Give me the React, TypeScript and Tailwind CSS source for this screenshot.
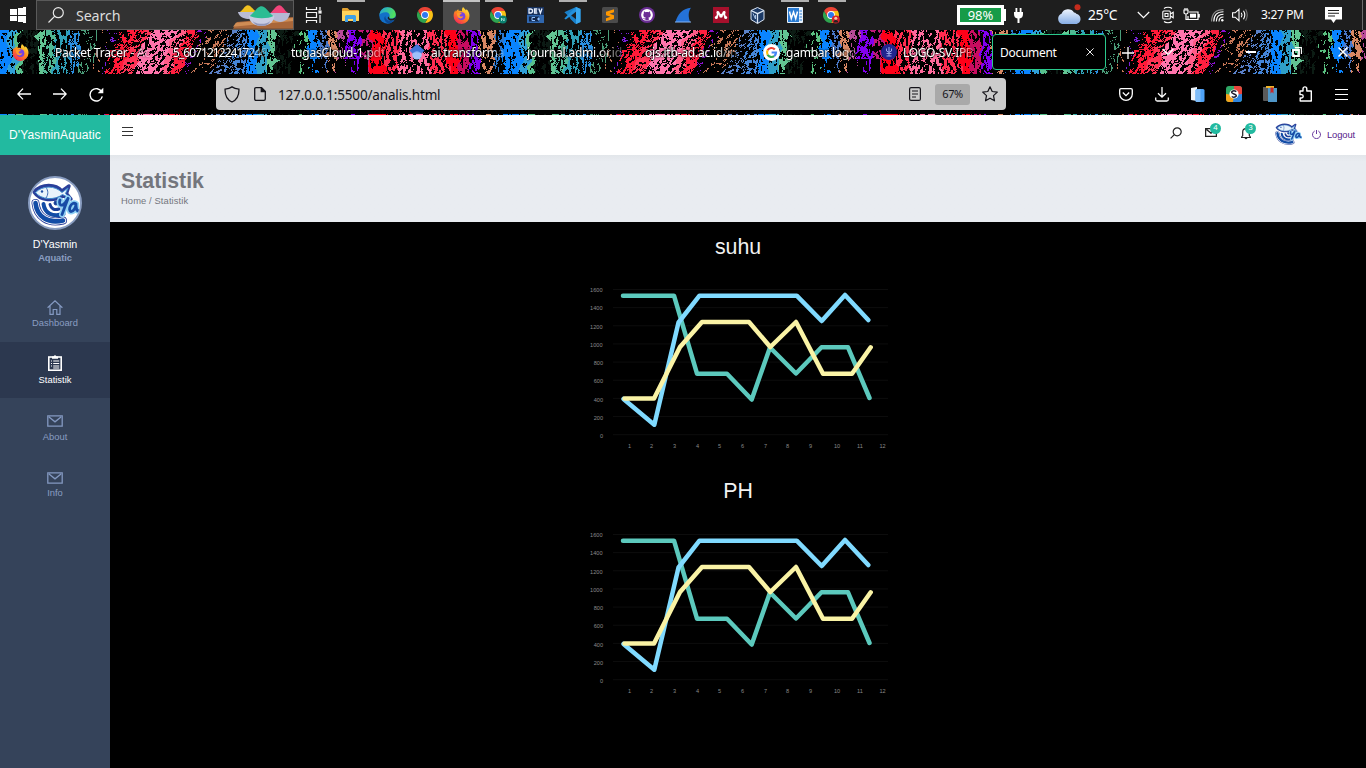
import React from "react";

/* ---------- window theme wallpaper ---------- */

type Stop = [number, string, number];

const STOPS: Stop[] = [
  [0, "#0a84ff", 0.92], [8, "#2f9fd8", 0.7], [16, "#58c08c", 0.8], [20, "#0c1a14", 0.5],
  [37, "#62c592", 0.9], [44, "#50b894", 0.65], [54, "#2fa0b8", 0.55], [68, "#2b8fe0", 0.55], [78, "#4a9c78", 0.25],
  [95, "#c87858", 0.14], [105, "#7a20d8", 0.2], [114, "#ff1a38", 0.5], [124, "#ff1a38", 0.88], [134, "#ff3355", 0.7],
  [144, "#ff74ac", 0.7], [170, "#ff5c88", 0.7], [180, "#ff2040", 0.72], [191, "#8a10d0", 0.22],
  [200, "#c87858", 0.34], [222, "#5a80c8", 0.4], [236, "#4484d8", 0.6], [246, "#0a84ff", 0.88],
  [258, "#2f9fc8", 0.78], [268, "#62c592", 0.8], [275, "#0c1c14", 0.5], [296, "#5ac080", 0.46],
  [307, "#0a84ff", 0.9], [318, "#4a78c8", 0.45], [327, "#d88864", 0.74], [338, "#b84a98", 0.55],
  [347, "#8200f0", 0.74], [358, "#c01878", 0.6], [371, "#ff0018", 0.92], [384, "#ff2c50", 0.55],
  [398, "#ff6a9c", 0.53], [428, "#ff2c50", 0.6], [446, "#ff0018", 0.92], [458, "#c80c60", 0.75],
  [468, "#8200f0", 0.65], [480, "#d88864", 0.5], [494, "#2b78d0", 0.45], [503, "#0a84ff", 0.92],
];

function hash(x: number, y: number) {
  let n = (x * 374761393 + y * 668265263) | 0;
  n = Math.imul(n ^ (n >>> 13), 1274126177);
  return ((n ^ (n >>> 16)) >>> 0) / 4294967295;
}

function noise(x: number, y: number) {
  const xi = Math.floor(x);
  const yi = Math.floor(y);
  const u = x - xi;
  const v = y - yi;
  const a = hash(xi, yi) * (1 - u) + hash(xi + 1, yi) * u;
  const b = hash(xi, yi + 1) * (1 - u) + hash(xi + 1, yi + 1) * u;
  return a * (1 - v) + b * v;
}

function colorAt(px: number, y: number): string | null {
  const x = ((px % 512) + 512) % 512;
  let sx = x;
  if (x > 85 && x < 245) {
    const k = Math.min(1, (x - 85) / 25, (245 - x) / 25);
    sx = x + k * (y - 14) * 0.45;
  }
  sx += (noise(x / 9, y / 6) - 0.5) * 9;
  sx = ((sx % 512) + 512) % 512;
  let s = STOPS[0];
  for (const stop of STOPS) if (stop[0] <= sx) s = stop;
  const diagonal = x > 105 && x < 245;
  const f = diagonal
    ? noise((x + y * 0.7) / 2, (y - x * 0.25) / 2.6) * 0.7 + hash(x, y) * 0.3
    : noise(x / 1.5, y / 3.4) * 0.78 + hash(x, y) * 0.22;
  let density = s[2];
  if (y > 28 && x > 290 && x < 368) density *= 0.3;
  return f < 0.2 + density * 0.5 ? s[1] : null;
}

function buildWallpaper(height: number, offset: number) {
  const paths: Record<string, string> = {};
  for (let y = 0; y < height; y++) {
    let x = 0;
    while (x < 1366) {
      const c = colorAt(x, y + offset);
      let end = x + 1;
      while (end < 1366 && colorAt(end, y + offset) === c) end++;
      if (c) paths[c] = (paths[c] || "") + `M${x} ${y}h${end - x}v1H${x}z`;
      x = end;
    }
  }
  return Object.entries(paths);
}

const TAB_PAPER = buildWallpaper(44, 0);
const EDGE_PAPER = buildWallpaper(1, 41);

function Wallpaper({ paths, height }: { paths: [string, string][]; height: number }) {
  return (
    <svg className="absolute top-0 left-0" width="1366" height={height} shapeRendering="crispEdges">
      {paths.map(([c, d]) => (
        <path key={c} d={d} fill={c} />
      ))}
    </svg>
  );
}

/* ---------- application icons ---------- */

const Firefox = () => (
  <svg width="17" height="17" viewBox="0 0 16 16">
    <defs>
      <linearGradient id="ff" x1="0.8" y1="0.1" x2="0.2" y2="1">
        <stop offset="0" stopColor="#ffe03a" />
        <stop offset="0.45" stopColor="#ff8a1c" />
        <stop offset="1" stopColor="#f5205c" />
      </linearGradient>
    </defs>
    <path d="M9.500 0c1 1.500 2 1.900 2.700 3.400l.6-1.200c1.900 1.900 2.700 4 2.700 6.200a7.400 7.400 0 0 1-14.900.2C.5 6 1.200 4.300 2.500 3l.1 1.600C3.300 3.200 4 2.500 5 2l.3 1.600C6.500 3.300 8 3.600 8.700 4.500 8 3 8.500 1.200 9.500 0z" fill="url(#ff)" />
    <circle cx="8" cy="8.600" r="3.600" fill="#7542e5" />
    <path d="M3.800 5.600c2-1 3.600-.5 4.700.9-1.500-.1-2.300.7-2.200 1.700.9 1.400 2.600.8 3.300.2-.2 2.100-2.500 2.900-4.100 1.900-1.300-.9-2-2.500-1.700-4.700z" fill="#ff9a28" />
  </svg>
);

const Chrome = ({ badge }: { badge?: "n" | "user" }) => (
  <svg width={badge ? 18 : 16} height="17" viewBox={badge ? "0 0 18 17" : "0 0 16 17"}>
    <path d="M8 4h6.900A8 8 0 0 1 8 16l3.400-6z" fill="#fbc116" />
    <path d="M1.070 4A8 8 0 0 1 14.930 4H8L4.500 10z" fill="#ea4335" />
    <path d="M1.070 4A8 8 0 0 0 8 16l3.400-6H4.500z" fill="#2ea44f" />
    <circle cx="8" cy="8" r="3.900" fill="#fff" />
    <circle cx="8" cy="8" r="3" fill="#2f78ee" />
    {badge === "n" && (
      <g>
        <circle cx="12.800" cy="12.500" r="4" fill="#0a8070" />
        <path d="M11.500 14v-3l2.600 3v-3" stroke="#bfeee2" strokeWidth=".8" fill="none" />
      </g>
    )}
    {badge === "user" && (
      <g>
        <circle cx="12.800" cy="12.500" r="4" fill="#d8202a" />
        <circle cx="12.800" cy="11.300" r="1.500" fill="#f3c9a8" />
        <path d="M10.400 15.500c.3-3.200 4.500-3.200 4.800 0z" fill="#222" />
      </g>
    )}
  </svg>
);

const Folder = () => (
  <svg width="17" height="16" viewBox="0 0 17 16">
    <path d="M0 2q0-1 1-1h4.500l2 2H16q1 0 1 1v2H0z" fill="#e0a030" />
    <path d="M0 4h17v9.500q0 .5-.5.500H.5q-.5 0-.5-.5z" fill="#ffd35c" />
    <path d="M3 15V9.500Q3 8 4.500 8h8q1.500 0 1.500 1.500V15h-3v-3H6v3z" fill="#3f9fe4" />
  </svg>
);

const Edge = () => (
  <svg width="17" height="17" viewBox="0 0 17 17">
    <defs>
      <linearGradient id="ed" x1="0" y1="0" x2="1" y2="0.3">
        <stop offset="0" stopColor="#1f9fe0" />
        <stop offset="1" stopColor="#4fe060" />
      </linearGradient>
    </defs>
    <circle cx="8.500" cy="8.500" r="8.300" fill="#1270c8" />
    <path d="M.3 8C1 3.500 4 .2 8.500.2c5 0 8.300 3.500 8.300 7 0 3-2.300 4.300-4.500 4.300-2 0-2.500-1-1.800-1.700C11.400 7 9 5 6.500 5.200 3.500 5.400 1 6.500.3 8z" fill="url(#ed)" />
    <path d="M6.400 9c-.3 3.600 3.300 6 8.600 4.300-.8 1.200-2.300 2.600-4.600 3.300C6 16 3.700 11 6.400 9z" fill="#0b4a98" />
    <path d="M10.300 9.900c-.8.900.4 2.400 3.300 1.800l3.200-1.400-1.100 2.500c-3 1.300-6.300.6-7-1.400-.2-1.200.8-1.900 1.600-1.500z" fill="#1e1e1e" />
  </svg>
);

const DevCpp = () => (
  <svg width="17" height="16" viewBox="0 0 17 16">
    <rect width="17" height="16" fill="#16305c" />
    <rect y="8" width="17" height="8" fill="#2f66ae" />
    <rect x="2" y="9.500" width="10" height="5" fill="#12264a" />
    <path d="M2 2h1.500q2 0 2 2t-2 2H2zM10.300 2H7.500v4h2.800M7.500 4H10M11.800 1.500l1.600 4.500L15 1.500" stroke="#e8f0ff" strokeWidth="1.300" fill="none" />
    <path d="M8 10.500H5v3h3M10 12h3M11.500 10.500v3" stroke="#8fc0ff" strokeWidth="1" fill="none" />
  </svg>
);

const VSCode = () => (
  <svg width="17" height="17" viewBox="0 0 17 17">
    <path d="M12 0l4.500 2v13L12 17 1.500 6.300.3 5.600l1.500-1.200z" fill="#1a7fc8" />
    <path d="M12 0L.3 11.400l1.500 1.200L12.500 4.500z" fill="#2390dc" />
    <path d="M11.500 17L6 11.500 12.300 6.500 12 12z" fill="#1a7fc8" />
    <path d="M12 4.800v7.400L7.200 8.500z" fill="#1e1e1e" />
    <path d="M12 0l4.500 2v13L12 17z" fill="#38a8f0" />
  </svg>
);

const Sublime = () => (
  <svg width="16" height="16" viewBox="0 0 16 16">
    <rect width="16" height="16" rx="1.500" fill="#4b4b4b" />
    <path d="M12 2.300v3L7.500 6.700 12 8.200v3.500L4 14.200v-3l4.500-1.400L4 8.300V4.800z" fill="#ff9800" />
  </svg>
);

const Github = () => (
  <svg width="16" height="16" viewBox="0 0 16 16">
    <circle cx="8" cy="8" r="8" fill="#6c2f96" />
    <circle cx="8" cy="8" r="5.900" fill="#fff" />
    <path d="M5 4.300l1.600.9c1-.3 1.900-.3 2.800 0l1.600-.9.2 1.900c1.300 2.300.1 4.100-1.800 4.400.5.600.4 1.800.4 3H6.400v-1.300c-1.300.2-1.800-.2-2.400-1.200 1 0 1 .8 2.400.4l.3-.9C4.600 10.300 3.700 8.400 4.800 6.200z" fill="#6c2f96" />
  </svg>
);

const Wireshark = () => (
  <svg width="17" height="16" viewBox="0 0 17 16">
    <path d="M.5 15C2.500 7.500 7.500 1.500 16 .8c-3 4.200-2.800 9.500-.8 14.200z" fill="#2472d8" />
    <path d="M0 15h16" stroke="#85b5f4" strokeWidth="1" />
  </svg>
);

const Mendeley = () => (
  <svg width="16" height="16" viewBox="0 0 16 16">
    <rect width="16" height="16" fill="#a6102c" />
    <path d="M3.300 10.500Q5 9 4.800 5.700L8 8.500l3.200-2.800Q11 9 12.700 10.500" stroke="#fff" strokeWidth="1.800" fill="none" />
    <circle cx="8" cy="8.800" r="1.900" fill="#fff" />
    <circle cx="3.300" cy="10.600" r="1.500" fill="#fff" />
    <circle cx="12.700" cy="10.600" r="1.500" fill="#fff" />
    <circle cx="5" cy="5.600" r="1.500" fill="#fff" />
    <circle cx="11" cy="5.600" r="1.500" fill="#fff" />
  </svg>
);

const VBox = () => (
  <svg width="15" height="17" viewBox="0 0 15 17">
    <path d="M7.500.5l6.500 3v9l-6.500 4-6.500-4v-9z" fill="#1c3a66" stroke="#dbe6f4" strokeWidth="1" />
    <path d="M1 3.500l6.500 3.200L14 3.500M7.500 6.700v9.500" stroke="#dbe6f4" strokeWidth="1.300" fill="none" />
    <path d="M3 6.500l2.500 5.500V8" stroke="#a9c4e6" fill="none" />
  </svg>
);

const Word = () => (
  <svg width="16" height="16" viewBox="0 0 16 16">
    <rect width="16" height="16" rx="1" fill="#e8f1fb" />
    <rect x="1" y="1" width="11" height="14" fill="#2b7cd3" />
    <path d="M2.500 4.500L4.300 11.500 6.500 5l2.200 6.500 1.800-7" stroke="#fff" strokeWidth="1.500" fill="none" />
    <path d="M12.500 4H15M12.500 7H15M12.500 10H15M12.500 13H15" stroke="#2b7cd3" strokeWidth="1" />
  </svg>
);

const TaskView = () => (
  <svg width="17" height="16" viewBox="0 0 17 16" fill="none" stroke="#f2f2f2" strokeWidth="1.200">
    <path d="M1.500 0v2.500h10V0M1.500 5.500h10v5h-10zM1.500 16v-2.500h10V16M15 0v3M15 8v8" />
    <rect x="14" y="4" width="2" height="2" fill="#f2f2f2" />
  </svg>
);

const apps: { icon: React.ReactNode; bar?: boolean; active?: boolean }[] = [
  { icon: <Folder />, bar: true },
  { icon: <Edge /> },
  { icon: <Chrome /> },
  { icon: <Firefox />, bar: true, active: true },
  { icon: <Chrome badge="n" />, bar: true },
  { icon: <DevCpp /> },
  { icon: <VSCode />, bar: true },
  { icon: <Sublime /> },
  { icon: <Github /> },
  { icon: <Wireshark /> },
  { icon: <Mendeley /> },
  { icon: <VBox /> },
  { icon: <Word />, bar: true },
  { icon: <Chrome badge="user" />, bar: true },
];

const Bowls = () => (
  <svg width="60" height="28" viewBox="0 0 61 28">
    <path d="M4 21L61 16V28H0z" fill="#a9673a" />
    <path d="M3 22L61 17v3L0 26z" fill="#cf8d55" />
    <path d="M7 11C11 8 12 4 15 4s5 4 9 7z" fill="#f0c020" />
    <path d="M5 11h19c-1 5-4 7-9 7S6 15 5 11z" fill="#b9bcd6" />
    <path d="M38 12C42 8 44 4 47 4s5 5 9 8z" fill="#f0447a" />
    <path d="M37 12h21c-1 6-5 9-10 9s-10-3-11-9z" fill="#b5b8d4" />
    <path d="M16 15c3-3 23-3 26 0-1 7-6 10-13 10s-12-3-13-10z" fill="#c9cce2" />
    <path d="M17 15C24 9 25 5 29 5s7 6 12 10c-5 3-18 3-24 0z" fill="#2bbd93" />
    <path d="M20 20c4 4 14 4 18 0-2 4-5 5-9 5s-7-1-9-5z" fill="#9297ba" />
  </svg>
);

function Taskbar() {
  return (
    <div className="flex h-[30px] w-full items-center bg-[#1e1e1e] text-white">
      <div className="flex w-9 justify-center">
        <svg width="16" height="16" viewBox="0 0 16 16" fill="#fff" shapeRendering="crispEdges">
          <path d="M0 2.500l7-1V7.500H0zM8 1.300L16 0v7.500H8zM0 8.500h7v6l-7-1zM8 8.500h8V16l-8-1.300z" />
        </svg>
      </div>
      <div className="flex h-[30px] w-[258px] items-center border border-[#5a5a5a] bg-[#323232] pl-[11px]">
        <svg width="16" height="16" viewBox="0 0 16 16" fill="none" stroke="#e8e8e8" strokeWidth="1.200">
          <circle cx="10.300" cy="5.700" r="5" />
          <path d="M6.800 9.200L.5 15.500" />
        </svg>
        <span className="mt-px ml-[12px] w-[120px] font-['Noto_Sans',sans-serif] text-[14.300px] leading-7 tracking-[-0.15px] text-[#dcdcdc]">Search</span>
        <div className="ml-auto">
          <Bowls />
        </div>
      </div>
      <div className="flex w-[38px] justify-center">
        <TaskView />
      </div>
      {apps.map((a, i) => (
        <div key={i} className={"flex h-[30px] w-[37px] flex-col items-center " + (a.active ? "bg-[#4a4a4a]" : "")}>
          <div className={"h-[2px] " + (a.active ? "w-full bg-[#c4c4c4]" : a.bar ? "w-7 bg-[#b0b0b0]" : "w-7")} />
          <div className="flex h-[26px] items-center">{a.icon}</div>
        </div>
      ))}
      <div className="ml-[107px] flex h-5 w-[47px] items-center justify-center border-[3px] border-white bg-[#169b48] font-['Noto_Sans',sans-serif] text-[13px] leading-4">
        98%
      </div>
      <div className="h-3 w-[2px] bg-white" />
      <svg className="ml-[7px]" width="11" height="15" viewBox="0 0 11 15" fill="#fff">
        <path d="M2.500 0h1.800v4h2.400V0h1.800v4H10v2q0 4-3.500 4.500V15h-2v-4.500Q1 10 1 6V4h1.500z" />
      </svg>
      <svg className="mb-[3px] ml-[32px]" width="26" height="22" viewBox="0 0 26 22">
        <defs>
          <linearGradient id="cl" x1="0" y1="0" x2="0" y2="1">
            <stop offset="0" stopColor="#eef4fd" />
            <stop offset="1" stopColor="#86aee6" />
          </linearGradient>
        </defs>
        <path d="M6 21a5.500 5.500 0 0 1-.5-10.300A7 7 0 0 1 18 9.500c1 0 1.700.4 2.300 1.200 6 1.300 5.500 10.300-.8 10.300z" fill="url(#cl)" />
        <circle cx="21.500" cy="4.200" r="3" fill="#c42b1c" />
      </svg>
      <span className="ml-[6px] w-[45px] font-['Noto_Sans',sans-serif] text-[13.800px] tracking-[-0.3px]">25°C</span>
      <svg className="ml-[4px]" width="13" height="8" viewBox="0 0 13 8" fill="none" stroke="#fff" strokeWidth="1.200">
        <path d="M.8 1l5.700 5.700L12.200 1" />
      </svg>
      <svg className="ml-[12px]" width="12" height="18" viewBox="0 0 12 18" fill="none" stroke="#fff" strokeWidth="1.100">
        <path d="M2 2.500C4 .8 8 .8 10 2.500M2 15.500c2 1.700 6 1.700 8 0" />
        <rect x=".8" y="5" width="7.500" height="8" rx="1" />
        <path d="M8.300 8l2.900-1.800v5.600L8.300 10M3 7.500h3v3H3z" />
      </svg>
      <svg className="ml-[9px]" width="17" height="14" viewBox="0 0 17 14" fill="none" stroke="#fff" strokeWidth="1.200">
        <path d="M6 4h9v7.500H5V8M1 2h4v2.500Q5 6 3 6T1 4.500zM2 0v2M4 0v2M3 6v5.500h2M16.200 6v3.500" />
        <rect x="7" y="5.700" width="6" height="4" fill="#fff" stroke="none" />
      </svg>
      <svg className="ml-[11px]" width="13" height="13" viewBox="0 0 13 13" fill="none" stroke="#fff" strokeWidth="1.100">
        <circle cx="11.300" cy="11.300" r="1.200" fill="#fff" stroke="none" />
        <path d="M8 12.500Q8 8 12.500 8" />
        <path d="M5.300 12.500Q5.300 5.300 12.500 5.300M2.800 12.500Q2.800 2.800 12.500 2.800" />
        <path d="M.6 12.500Q.6.6 12.500.6" stroke="#8a8a8a" />
      </svg>
      <svg className="ml-[8px]" width="16" height="14" viewBox="0 0 16 14" fill="none" stroke="#fff" strokeWidth="1.100">
        <path d="M.6 4.800h2.600L7 1.300v11.400L3.200 9.200H.6zM9.300 4.700q1.500 2.300 0 4.600M11.500 2.800q2.600 4.200 0 8.400" />
        <path d="M13.600 1.200q3.300 5.800 0 11.600" stroke="#777" />
      </svg>
      <span className="ml-[13px] w-[54px] font-['Noto_Sans',sans-serif] text-[12px] tracking-[-0.35px] whitespace-nowrap">3:27 PM</span>
      <svg className="ml-[10px]" width="17" height="16" viewBox="0 0 17 16">
        <path d="M0 0h17v12.500h-6L8.500 16 6 12.500H0z" fill="#fff" />
        <path d="M3 3.500h11M3 6.200h11M3 9h7" stroke="#1e1e1e" strokeWidth="1.100" />
      </svg>
      <div className="mr-[3px] ml-auto h-[30px] w-px bg-[#6b6b6b]" />
    </div>
  );
}

/* ---------- browser chrome ---------- */

const Scholar = () => (
  <svg width="16" height="16" viewBox="0 0 16 16">
    <circle cx="8" cy="10.800" r="4.800" fill="#9fc1fa" />
    <path d="M8 0l7.500 6.500-3 3Q8 5.500 3.500 9.500l-3-3z" fill="#3f74d8" />
    <path d="M3.700 9Q8 5.500 12.300 9 8 7.500 3.700 9z" fill="#6f9df0" />
  </svg>
);

const Google = () => (
  <svg width="17" height="17" viewBox="0 0 17 17" fill="none" strokeWidth="2.200">
    <circle cx="8.500" cy="8.500" r="8.500" fill="#fff" />
    <path d="M4.600 6.300A4.500 4.500 0 0 1 11.800 5.400" stroke="#ea4335" />
    <path d="M4.600 10.700a4.500 4.500 0 0 1 0-4.400" stroke="#fbbc05" />
    <path d="M11.200 12.100a4.500 4.500 0 0 1-6.600-1.400" stroke="#34a853" />
    <path d="M8.600 8.500H13a4.500 4.500 0 0 1-1.800 3.600" stroke="#4285f4" />
  </svg>
);

const Crest = () => (
  <svg width="16" height="16" viewBox="0 0 16 16" fill="none">
    <circle cx="8" cy="8" r="8" fill="#20248e" />
    <path d="M8 3v9M5.500 4.500v2.500Q8 9.500 10.500 7V4.500M5.500 9.500h5M5.500 12h5" stroke="#98a5e8" strokeWidth="1" />
  </svg>
);

const tabs: { label: string; icon?: React.ReactNode; tracking: string }[] = [
  { label: "Packet Tracer - Ac", tracking: "tracking-[-0.22px]" },
  { label: "5_60712122417246", tracking: "tracking-[-0.95px]" },
  { label: "tugasCloud-1.pdf", tracking: "tracking-[-0.22px]" },
  { label: "ai transforma", icon: <Scholar />, tracking: "tracking-[-0.22px]" },
  { label: "journal.admi.or.id", tracking: "tracking-[-0.22px]" },
  { label: "ojs.itb-ad.ac.id/in", tracking: "tracking-[-0.22px]" },
  { label: "gambar logo", icon: <Google />, tracking: "tracking-[-0.22px]" },
  { label: "LOGO-SV-IPB", icon: <Crest />, tracking: "tracking-[-0.35px]" },
];

function TabStrip() {
  return (
    <div className="relative h-11 w-full overflow-hidden bg-black">
      <Wallpaper paths={TAB_PAPER} height={44} />
      <div className="relative flex h-11 items-center font-['Noto_Sans',sans-serif] text-[12px] text-white">
        <div className="flex w-[47px] pl-3">
          <Firefox />
        </div>
        {tabs.map((t) => (
          <div key={t.label} className="flex w-[118px] items-center gap-[6px] pl-2">
            {t.icon}
            <span
              className={
                "mt-px whitespace-nowrap [text-shadow:0_0_2px_#000,0_0_2px_#000] [mask-image:linear-gradient(to_right,#000_76%,rgba(0,0,0,0.25))] " +
                t.tracking
              }
            >
              {t.label}
            </span>
          </div>
        ))}
        <div className="ml-px flex h-9 w-[114px] items-center justify-between rounded border border-[#2ac98c] bg-black pr-[11px] pl-[7px]">
          <span className="mt-px tracking-[-0.3px]">Document</span>
          <svg width="8" height="8" viewBox="0 0 8 8" stroke="#eee" strokeWidth="1">
            <path d="M.4.4l7.200 7.200M7.600.4L.4 7.600" />
          </svg>
        </div>
        <svg className="mt-px ml-[16px]" width="12" height="12" viewBox="0 0 12 12" stroke="#fff" strokeWidth="1.300">
          <path d="M6 0v12M0 6h12" />
        </svg>
        <svg className="ml-[28px]" width="12" height="8" viewBox="0 0 12 8" fill="none" stroke="#fff" strokeWidth="1.300">
          <path d="M.7 1L6 6.500 11.300 1" />
        </svg>
        <div className="ml-[72px] h-[2px] w-[10px] bg-white" />
        <svg className="ml-[36px]" width="10" height="10" viewBox="0 0 10 10" fill="none" stroke="#fff">
          <path d="M1 3h6v6H1z" strokeWidth="1.800" />
          <path d="M3 .6h6.400V7" strokeWidth="1.100" />
        </svg>
        <svg className="ml-[36px]" width="10" height="10" viewBox="0 0 10 10" stroke="#fff" strokeWidth="1.500">
          <path d="M.5.500l9 9M9.500.500l-9 9" />
        </svg>
      </div>
    </div>
  );
}

function NavBar() {
  return (
    <div className="flex h-10 w-full items-center bg-black">
      <svg className="ml-[17px]" width="14" height="12" viewBox="0 0 14 12" fill="none" stroke="#fff" strokeWidth="1.300">
        <path d="M6 .6L.8 6 6 11.400M.8 6H14" />
      </svg>
      <svg className="ml-[22px]" width="14" height="12" viewBox="0 0 14 12" fill="none" stroke="#fff" strokeWidth="1.300">
        <path d="M8 .6L13.200 6 8 11.400M13.200 6H0" />
      </svg>
      <svg className="ml-[22px]" width="15" height="15" viewBox="0 0 15 15" fill="none" stroke="#fff" strokeWidth="1.400">
        <path d="M12.800 5A6.200 6.200 0 1 0 13.300 9.300" />
        <path d="M14.300.7v5.600H8.700z" fill="#fff" stroke="none" />
      </svg>
      <div className="ml-[112px] flex h-8 w-[790px] items-center rounded bg-[#cccccc]">
        <svg className="ml-[8px]" width="16" height="17" viewBox="0 0 16 17" fill="none" stroke="#15141a" strokeWidth="1.300">
          <path d="M8 .9c2 1.400 4.200 2 6.900 2.200C15.200 9 13 13.800 8 16 3 13.800.8 9 1.100 3.100 3.800 2.900 6 2.300 8 .9z" />
        </svg>
        <svg className="ml-[14px]" width="12" height="14" viewBox="0 0 12 14" fill="none" stroke="#15141a" strokeWidth="1.300">
          <path d="M2 .7h5.500L11.300 4.500V12q0 1.300-1.300 1.300H2Q.7 13.300.7 12V2Q.7.700 2 .700z" />
          <path d="M7.300.7v4h4z" fill="#15141a" />
        </svg>
        <span className="mt-[2px] ml-[12px] font-['Noto_Sans',sans-serif] text-[13.500px] tracking-[-0.16px] text-[#15141a]">127.0.0.1:5500/analis.html</span>
        <svg className="ml-auto" width="12" height="14" viewBox="0 0 12 14" fill="none" stroke="#15141a" strokeWidth="1.200">
          <rect x=".6" y=".6" width="10.800" height="12.800" rx="1.500" />
          <path d="M3 4h6M3 7h6M3 10h4" />
        </svg>
        <div className="mt-px ml-[14px] flex h-[21px] w-[35px] items-center justify-center rounded-[3px] bg-[#a9a9a9] font-['Noto_Sans',sans-serif] text-[11px] tracking-[-0.4px] text-[#15141a]">
          67%
        </div>
        <svg className="mr-[8px] ml-[12px]" width="16" height="16" viewBox="0 0 16 16" fill="none" stroke="#15141a" strokeWidth="1.200" strokeLinejoin="round">
          <path d="M8 .8l2.200 4.700 5.100.6-3.800 3.500 1 5.200L8 12.200l-4.500 2.600 1-5.200L.7 6.100l5.100-.6z" />
        </svg>
      </div>
      <svg className="ml-[113px]" width="14" height="13" viewBox="0 0 14 13" fill="none" stroke="#fff" strokeWidth="1.300">
        <path d="M2 .7h10q1.300 0 1.300 1.300v4a6.300 6.300 0 0 1-12.600 0V2Q.7.700 2 .700zM3.800 4.500L7 7.600l3.200-3.100" />
      </svg>
      <svg className="ml-[22px]" width="14" height="15" viewBox="0 0 14 15" fill="none" stroke="#fff" strokeWidth="1.300">
        <path d="M7 0v10M3 6.200L7 10.200l4-4M.7 10.500v2q0 1.500 1.500 1.500h9.600q1.500 0 1.500-1.500v-2" />
      </svg>
      <svg className="ml-[22px]" width="14" height="15" viewBox="0 0 14 15">
        <path d="M0 1l6-1v14l-6-1z" fill="#eef3f8" />
        <rect x="4.500" y="2" width="9" height="13" rx="1.500" fill="#4fa3f7" />
        <path d="M4.500 3l5-1v13H6q-1.500 0-1.500-1.500z" fill="#7ebcf8" />
      </svg>
      <svg className="ml-[21px]" width="16" height="16" viewBox="0 0 16 16">
        <rect width="16" height="16" rx="3" fill="#2fa866" />
        <path d="M8 0h5q3 0 3 3v6L8 8z" fill="#e8453c" />
        <path d="M0 8l8 1v7H3q-3 0-3-3z" fill="#f5a31c" />
        <path d="M8 9l8-1v5q0 3-3 3H7z" fill="#2f86e0" />
        <circle cx="8" cy="8" r="4.600" fill="#fff" />
        <path d="M10.300 5.600Q8 4 6.200 5.300T8 8t1.700 2.700T5.700 10.500" stroke="#223" strokeWidth="1.500" fill="none" />
      </svg>
      <svg className="ml-[21px]" width="15" height="16" viewBox="0 0 15 16">
        <path d="M0 1h8v14H1q-1 0-1-1z" fill="#5a5a5a" />
        <rect x="5" y="2" width="9" height="14" fill="#5097c8" />
        <rect x="3" y="0" width="8" height="2" fill="#f0b429" />
        <path d="M7.500 1.500h3v6L9 6l-1.500 1.500z" fill="#c82828" />
      </svg>
      <svg className="ml-[20px]" width="15" height="16" viewBox="0 0 15 16" fill="none" stroke="#fff" strokeWidth="1.400" strokeLinejoin="round">
        <path d="M5 5V2.800a1.900 1.900 0 0 1 3.800 0V5h4.500v10H2.200v-3h1.300a1.700 1.700 0 0 0 0-3.400H2V5z" strokeDasharray="none" />
      </svg>
      <svg className="ml-[22px]" width="13" height="11" viewBox="0 0 13 11" stroke="#fff" strokeWidth="1.200" shapeRendering="crispEdges">
        <path d="M0 .6h13M0 5.500h13M0 10.400h13" />
      </svg>
    </div>
  );
}

/* ---------- page ---------- */

const FishMark = () => (
  <g fill="none" strokeLinecap="round">
    <path d="M5.500 25C7 39 18 46 33 42.500" stroke="#2a3f9a" strokeWidth="8" />
    <path d="M5.500 25C7 39 18 46 33 42.500" stroke="#fff" strokeWidth="6.400" />
    <path d="M5.500 25C7 39 18 46 33 42.500" stroke="#124ca6" strokeWidth="4.600" />
    <path d="M13.500 26c1 9 9 13.500 20 10" stroke="#124ca6" strokeWidth="4" />
    <path d="M20 26.500c1 4 4 6 9 4.500" stroke="#1c3f98" strokeWidth="3" />
    <circle cx="26" cy="25" r="2" fill="#123f96" stroke="#1c3f98" />
    <path d="M4 14C12 5 26 6 32 13L39 8 36.500 15.500 41 21 33 18C24 23.500 10 23 4 14z" fill="#fff" stroke="#2a3f9a" strokeWidth="3.400" strokeLinejoin="round" />
    <path d="M5.500 14.500C13 7 25 7.500 32 14.500L38 10 35.500 15.500 39.500 20 32.500 16.500C25 22.500 11 22 5.500 14.500z" fill="#e9f3fb" stroke="#3f8ccc" strokeWidth="1" />
    <path d="M16 9.500c2.500 3 2.500 7 0 10.500" stroke="#3f6cb4" strokeWidth="1" />
    <circle cx="12" cy="13.500" r="1.200" fill="#1f4ea4" />
    <path d="M30 22c-1.500 5 1.500 7 5 3l3-4.500M38 20.500l-6 16M46 26c-5-3.500-8.500 7-5 7.500 3 0 5-5 5-7.500 0 4 0 7 3 7" stroke="#8fd0f4" strokeWidth="6" />
    <path d="M30 22c-1.500 5 1.500 7 5 3l3-4.500M38 20.500l-6 16M46 26c-5-3.500-8.500 7-5 7.500 3 0 5-5 5-7.500 0 4 0 7 3 7" stroke="#174ba6" strokeWidth="2.800" />
  </g>
);

const Home = () => (
  <svg width="16" height="15" viewBox="0 0 16 15" fill="none" stroke="#8499c1" strokeWidth="1.200">
    <path d="M.6 7.800L8 .8l7.400 7M3 6v8.400h3.200V9.500h3.600v4.900H13V6" />
  </svg>
);
const Clipboard = () => (
  <svg width="14" height="16" viewBox="0 0 14 16">
    <rect x=".8" y="2" width="12.400" height="13.200" fill="#2c384f" stroke="#fff" strokeWidth="1.600" />
    <path d="M4 1.500h1.500Q7-.8 8.500 1.500H10v2.300H4z" fill="#fff" />
    <path d="M3 6h1M3 8.500h1M3 11h1M5.200 6h6M5.200 8.500h6M5.200 11h6M5.200 13h6" stroke="#fff" strokeWidth="1.200" />
  </svg>
);
const Mail = ({ color = "#8499c1", w = 16, h = 12 }: { color?: string; w?: number; h?: number }) => (
  <svg width={w} height={h} viewBox="0 0 16 12" fill="none" stroke={color} strokeWidth={w < 16 ? 1.7 : 1.3}>
    <path d="M.8.900h14.400v10.200H.8zM2 2L8 6.800 14 2" />
  </svg>
);

const items = [
  { label: "Dashboard", icon: <Home />, gap: "pt-[13px] gap-[2px]" },
  { label: "Statistik", icon: <Clipboard />, active: true, gap: "pt-[13px] gap-[3px]" },
  { label: "About", icon: <Mail />, gap: "pt-[15px] gap-[2px]" },
  { label: "Info", icon: <Mail />, gap: "pt-[16px] gap-[1px]" },
];

function Sidebar() {
  return (
    <aside className="flex w-[110px] shrink-0 flex-col bg-[#35435a]">
      <div className="flex h-10 items-center justify-center bg-[#22baa0] text-[12px] tracking-[0.12px] text-white">D'YasminAquatic</div>
      <div className="flex h-[131px] flex-col items-center pt-[21px]">
        <div className="size-[54px] overflow-hidden rounded-full border-2 border-[#899dc1] bg-white">
          <svg width="50" height="50" viewBox="0 0 50 50">
            <FishMark />
          </svg>
        </div>
        <p className="mt-[7px] text-[10.700px] leading-[14px] text-white">D'Yasmin</p>
        <p className="text-[9.400px] leading-[13px] font-bold tracking-[-0.1px] text-[#899dc1]">Aquatic</p>
      </div>
      <nav className="flex flex-col">
        {items.map((it) => (
          <div
            key={it.label}
            className={"flex h-14 flex-col items-center " + it.gap + (it.active ? " bg-[#2c384f] text-white" : " text-[#899dc1]")}
          >
            <div className="flex h-4 items-center">{it.icon}</div>
            <span className="text-[9.400px] leading-[11px]">{it.label}</span>
          </div>
        ))}
      </nav>
    </aside>
  );
}

function TopBar() {
  return (
    <header className="flex h-10 w-full items-center bg-white">
      <svg className="mb-[8px] ml-[12px]" width="11" height="9" viewBox="0 0 11 9" stroke="#333" strokeWidth="1" shapeRendering="crispEdges">
        <path d="M0 .5h11M0 4.500h11M0 8.500h11" />
      </svg>
      <svg className="mb-[5px] ml-auto" width="12" height="12" viewBox="0 0 12 12" fill="none" stroke="#222" strokeWidth="1.200">
        <circle cx="7.200" cy="4.800" r="4" />
        <path d="M4.300 7.700L.6 11.400" />
      </svg>
      <div className="relative mb-[3px] ml-[23px] h-3 w-3">
        <Mail color="#222" w={12} h={9} />
        <span className="absolute -top-[5px] left-[5px] flex size-[11px] items-center justify-center rounded-full bg-[#22baa0] text-[8px] leading-none text-white">4</span>
      </div>
      <div className="relative mb-[3px] ml-[24px] h-3 w-3">
        <svg width="10" height="12" viewBox="0 0 10 12" fill="none" stroke="#222" strokeWidth="1.200">
          <path d="M.3 9.500h9.400L8.300 7.500V4a3.300 3.300 0 0 0-6.600 0v3.500zM4 10q1 1.500 2 0" />
        </svg>
        <span className="absolute -top-[5px] left-[4px] flex size-[11px] items-center justify-center rounded-full bg-[#22baa0] text-[8px] leading-none text-white">3</span>
      </div>
      <svg className="mb-[4px] ml-[22px]" width="27" height="23" viewBox="1 3 50 45" preserveAspectRatio="none">
        <FishMark />
      </svg>
      <svg className="mb-[2px] ml-[10px]" width="9" height="9" viewBox="0 0 9 9" fill="none" stroke="#6a3a9e" strokeWidth="1">
        <path d="M2.700 1A4 4 0 1 0 6.300 1M4.500 0v4" />
      </svg>
      <span className="mr-[11px] ml-[6px] text-[9.400px] tracking-[-0.1px] text-[#551a8b]">Logout</span>
    </header>
  );
}

const teal = "43,65.700 94,65.700 117,143.700 147,143.700 171.700,169.500 190,117.500 216,143.500 241.500,117.300 268,117.300 289.500,168";
const sky = "43.500,169 74.300,194.700 98.500,92.500 119.500,65.700 216.700,65.700 241.700,91 265,65 288.300,90";
const yellow = "44.500,168.500 74,168.500 100,117 122,92 169,92 190.300,117 216,92 243,143.700 272,143.700 290.700,117.300";
const xLabels = [49.5, 71.5, 94.5, 117.5, 139.5, 162.5, 185.5, 207.5, 230.5, 257, 280, 302.5];

function Chart() {
  return (
    <svg width="320" height="180" viewBox="0 50 320 180">
      {Array.from({ length: 9 }, (_, i) => (
        <g key={i}>
          <path d={`M33 ${59.5 + i * 18.15}H308`} stroke="#0d0d0d" strokeWidth="1" />
          <text x={22.5 + (i > 3 ? 0.5 : 0)} y={62 + i * 18.25} textAnchor="end" fontSize="5.600" fill="#8a8a8a">
            {1600 - i * 200}
          </text>
        </g>
      ))}
      {xLabels.map((x, i) => (
        <text key={x} x={x} y="218" textAnchor="middle" fontSize="5.600" fill="#8a8a8a">
          {i + 1}
        </text>
      ))}
      <g fill="none" strokeWidth="4.500" strokeLinecap="round" strokeLinejoin="round">
        <polyline points={teal} stroke="#5cc9bd" />
        <polyline points={sky} stroke="#80daff" />
        <polyline points={yellow} stroke="#faf3a5" />
      </g>
    </svg>
  );
}

function ChartPanel({ title, space }: { title: string; space: string }) {
  return (
    <section className={"flex h-[245px] flex-col items-center justify-between pb-[7px] " + space}>
      <h2 className="h-[26px] text-[21.330px] leading-[26px] text-[#f2f2f2]">{title}</h2>
      <div className="mr-[-4px]">
        <Chart />
      </div>
    </section>
  );
}

export default function App() {
  return (
    <div className="flex h-screen w-full flex-col overflow-hidden bg-black font-['Liberation_Sans',Arial,sans-serif]">
      <Taskbar />
      <TabStrip />
      <NavBar />
      <div className="relative h-px w-full overflow-hidden bg-black">
        <Wallpaper paths={EDGE_PAPER} height={1} />
      </div>
      <div className="flex min-h-0 flex-1">
        <Sidebar />
        <div className="flex min-w-0 flex-1 flex-col">
          <TopBar />
          <div className="h-[67px] bg-gradient-to-b from-[#e2e6ea] to-[#e9ecf1] to-10% pt-[13px] pl-[11px] text-[#74767d]">
            <h1 className="text-[21.330px] leading-[26px] font-bold">Statistik</h1>
            <p className="text-[9.400px] leading-[13px] tracking-[0.1px]">Home / Statistik</p>
          </div>
          <main className="flex-1 bg-black">
            <ChartPanel title="suhu" space="pt-[12px]" />
            <ChartPanel title="PH" space="pt-[11px]" />
          </main>
        </div>
      </div>
    </div>
  );
}
